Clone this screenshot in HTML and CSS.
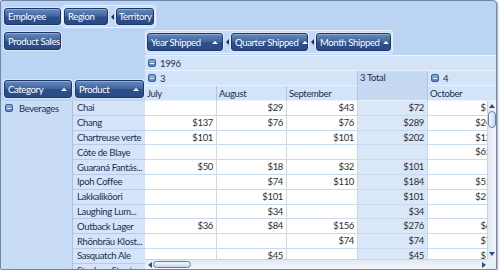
FILE: index.html
```html
<!DOCTYPE html>
<html lang="en">
<head>
    <meta charset="UTF-8">
    <title>Product Sales Pivot</title>
    <link rel="stylesheet" href="styles.css">
</head>
<body>
<div class="pivot">
    <div class="filter-bar">
        <div class="btn employee">Employee</div>
        <div class="field-group">
            <div class="btn region">Region</div>
            <div class="sep"></div>
            <div class="btn territory">Territory</div>
        </div>
    </div>

    <div class="main">
        <div class="left">
            <div class="data-fields">
                <div class="btn sales">Product Sales</div>
                <div class="row-fields">
                    <div class="btn sort category">Category</div>
                    <div class="btn sort product">Product</div>
                </div>
            </div>
            <div class="row-area">
                <div class="cat-col">
                    <div class="cat-cell"><span class="minus"></span>Beverages</div>
                </div>
                <div class="prod-col">
                    <div class="pr">Chai</div>
                    <div class="pr">Chang</div>
                    <div class="pr">Chartreuse verte</div>
                    <div class="pr">Côte de Blaye</div>
                    <div class="pr">Guaraná Fantás...</div>
                    <div class="pr">Ipoh Coffee</div>
                    <div class="pr">Lakkaliköori</div>
                    <div class="pr">Laughing Lum...</div>
                    <div class="pr">Outback Lager</div>
                    <div class="pr">Rhönbräu Klost...</div>
                    <div class="pr">Sasquatch Ale</div>
                    <div class="pr">Steeleye Stout</div>
                </div>
            </div>
        </div>

        <div class="right">
            <div class="col-fields">
                <div class="field-group cols">
                    <div class="btn sort year">Year Shipped</div>
                    <div class="sep"></div>
                    <div class="btn sort quarter">Quarter Shipped</div>
                    <div class="sep"></div>
                    <div class="btn sort month">Month Shipped</div>
                </div>
            </div>

            <div class="col-header">
                <div class="hc year-cell"><span class="minus"></span>1996</div>
                <div class="hc q3"><span class="minus"></span>3</div>
                <div class="hc total">3 Total</div>
                <div class="hc q4"><span class="minus"></span>4</div>
                <div class="hc">July</div>
                <div class="hc">August</div>
                <div class="hc">September</div>
                <div class="hc oct">October</div>
            </div>

            <div class="body">
                <div class="cells">
                    <div class="dr"><div class="c"></div><div class="c">$29</div><div class="c">$43</div><div class="c tot">$72</div><div class="c">$18</div></div>
                    <div class="dr"><div class="c">$137</div><div class="c">$76</div><div class="c">$76</div><div class="c tot">$289</div><div class="c">$247</div></div>
                    <div class="dr"><div class="c">$101</div><div class="c"></div><div class="c">$101</div><div class="c tot">$202</div><div class="c">$126</div></div>
                    <div class="dr"><div class="c"></div><div class="c"></div><div class="c"></div><div class="c tot"></div><div class="c">$659</div></div>
                    <div class="dr"><div class="c">$50</div><div class="c">$18</div><div class="c">$32</div><div class="c tot">$101</div><div class="c"></div></div>
                    <div class="dr"><div class="c"></div><div class="c">$74</div><div class="c">$110</div><div class="c tot">$184</div><div class="c">$552</div></div>
                    <div class="dr"><div class="c"></div><div class="c">$101</div><div class="c"></div><div class="c tot">$101</div><div class="c">$216</div></div>
                    <div class="dr"><div class="c"></div><div class="c">$34</div><div class="c"></div><div class="c tot">$34</div><div class="c"></div></div>
                    <div class="dr"><div class="c">$36</div><div class="c">$84</div><div class="c">$156</div><div class="c tot">$276</div><div class="c">$60</div></div>
                    <div class="dr"><div class="c"></div><div class="c"></div><div class="c">$74</div><div class="c tot">$74</div><div class="c">$78</div></div>
                    <div class="dr"><div class="c"></div><div class="c">$45</div><div class="c"></div><div class="c tot">$45</div><div class="c">$14</div></div>
                    <div class="dr"><div class="c"></div><div class="c"></div><div class="c"></div><div class="c tot"></div><div class="c"></div></div>
                </div>
                <div class="vscroll">
                    <span class="arrow up"></span>
                    <span class="thumb"></span>
                    <span class="fill"></span>
                    <span class="arrow down"></span>
                </div>
            </div>

            <div class="hbar">
                <div class="htrack">
                    <span class="arrow left"></span>
                    <span class="thumb"></span>
                    <span class="fill"></span>
                    <span class="arrow right"></span>
                </div>
                <div class="corner"></div>
            </div>
        </div>
    </div>
</div>
</body>
</html>
```

FILE: styles.css
```css
body {
  margin: 0;
  font-family: Lato, "Open Sans", sans-serif;
  font-size: 9.5px;
  letter-spacing: -0.35px;
}

.pivot {
  width: 497px;
  height: 270px;
  box-sizing: border-box;
  border: 1px solid #6f87aa;
  border-radius: 2px 4px 2px 2px;
  background: #bcd4f4;
  display: flex;
  flex-direction: column;
  overflow: hidden;
  box-shadow: 1px 1px 2px rgba(0, 0, 0, 0.35);
}

/* field buttons */
.btn {
  height: 17px;
  box-sizing: border-box;
  display: flex;
  align-items: center;
  padding: 0 2px;
  color: #fff;
  white-space: nowrap;
  border: 1px solid #1d3868;
  border-radius: 3px;
  background: linear-gradient(#6688bd, #41659e 48%, #2d508b 52%, #2a4b85);
  box-shadow: 0 0 0 1px rgba(255, 255, 255, 0.45), inset 0 1px 0 rgba(255, 255, 255, 0.3);
  flex: none;
}

.btn.sort {
  justify-content: space-between;
  height: 18px;
  padding-left: 3px;
}

.btn.sort::after {
  content: "";
  border-bottom: 3px solid #fff;
  border-left: 3px solid transparent;
  border-right: 3px solid transparent;
  margin: 0 2px 0 3px;
}

.employee { width: 57px; margin-top: 3px; padding-left: 3px; }
.region { width: 44px; padding-left: 3px; }
.territory { width: 38px; }
.sales { width: 57px; height: 18px; padding-left: 3px; }
.year { width: 76px; }
.quarter { width: 77px; }
.month { width: 75px; }
.category { width: 68px; }
.product { width: 69px; }

.field-group {
  display: flex;
  align-items: center;
  height: 23px;
  box-sizing: border-box;
  padding: 0 1px;
  border: 1px solid #eaf2fc;
  border-radius: 3px;
  background: rgba(255, 255, 255, 0.12);
}

.field-group.cols {
  height: 24px;
}

.sep {
  width: 8px;
  display: flex;
  justify-content: center;
  flex: none;
}

.sep::before {
  content: "";
  border-right: 3px solid #1c335e;
  border-top: 3px solid transparent;
  border-bottom: 3px solid transparent;
}

.filter-bar {
  height: 28px;
  flex: none;
  box-sizing: border-box;
  display: flex;
  align-items: flex-start;
  gap: 1px;
  padding: 4px 0 0 3px;
}

.main {
  flex: 1;
  display: flex;
  min-height: 0;
}

/* left side: data field + row fields + row headers */
.left {
  width: 144px;
  flex: none;
  display: flex;
  flex-direction: column;
}

.data-fields {
  height: 72px;
  flex: none;
  box-sizing: border-box;
  display: flex;
  flex-direction: column;
  justify-content: space-between;
  padding: 3px 0 3px 3px;
}

.row-fields {
  display: flex;
  gap: 3px;
}

.row-area {
  flex: 1;
  display: flex;
  overflow: hidden;
  color: #1b2f4e;
}

.cat-col {
  width: 72px;
  box-sizing: border-box;
  border-right: 1px solid #a9c1e2;
  background: #c8dcf5;
}

.cat-cell {
  height: 14.8px;
  display: flex;
  align-items: center;
  padding-left: 4px;
}

.cat-cell .minus {
  margin-right: 6px;
}

.prod-col {
  width: 72px;
}

.pr {
  height: 14.8px;
  box-sizing: border-box;
  display: flex;
  align-items: center;
  padding-left: 4px;
  white-space: nowrap;
  overflow: hidden;
  background: #d5e4f8;
  border-bottom: 1px solid #b6cbe8;
}

.minus {
  width: 8px;
  height: 8px;
  box-sizing: border-box;
  flex: none;
  border: 1px solid #3b5f9c;
  border-radius: 2px;
  background: linear-gradient(#8cadda, #5a80bf);
  display: flex;
  align-items: center;
  justify-content: center;
}

.minus::before {
  content: "";
  width: 4px;
  height: 1px;
  background: #e8f0fb;
}

/* right side: column fields, column headers, cells */
.right {
  width: 351px;
  flex: none;
  display: flex;
  flex-direction: column;
}

.col-fields {
  height: 26px;
  flex: none;
  box-sizing: border-box;
  padding-top: 1px;
  display: flex;
}

.col-header {
  display: grid;
  grid-template-columns: 72px 70px 71px 70px 72px;
  grid-template-rows: 15px 15px 15px;
  overflow: hidden;
  border-top: 1px solid #e9f1fb;
  flex: none;
  color: #1b2f4e;
}

.hc {
  box-sizing: border-box;
  display: flex;
  align-items: center;
  padding-left: 2px;
  white-space: nowrap;
  background: #d3e3f8;
  border-right: 1px solid #aec5e4;
  border-bottom: 1px solid #e9f1fb;
}

.hc .minus {
  margin: 0 4px 0 1px;
}

.year-cell {
  grid-column: 1 / -1;
  border-right: none;
}

.q3 {
  grid-column: 1 / 4;
}

.total {
  grid-column: 4;
  grid-row: 2 / 4;
  align-items: flex-start;
  padding-top: 1px;
  background: #c5d9f2;
}

.q4,
.oct {
  grid-column: 5;
}

.body {
  height: 158px;
  flex: none;
  display: flex;
}

.cells {
  width: 342px;
  overflow: hidden;
  background: #fff;
  color: #2e2e2e;
}

.dr {
  display: grid;
  grid-template-columns: 72px 70px 71px 70px 72px;
  height: 14.8px;
}

.c {
  box-sizing: border-box;
  text-align: right;
  padding-right: 3px;
  line-height: 13.8px;
  border-right: 1px solid #c9d9ee;
  border-bottom: 1px solid #c9d9ee;
}

.c.tot {
  background: #dae7f8;
}

/* scrollbars */
.vscroll {
  width: 9px;
  flex: none;
  box-sizing: border-box;
  display: flex;
  flex-direction: column;
  align-items: center;
  padding: 3px 0;
  background: linear-gradient(90deg, #dfe8f5, #f2f6fb);
  border-left: 1px solid #c3d3ea;
}

.fill {
  flex: 1;
}

.arrow {
  width: 0;
  height: 0;
  flex: none;
}

.arrow.up {
  border-bottom: 4px solid #2d4c80;
  border-left: 3px solid transparent;
  border-right: 3px solid transparent;
}

.arrow.down {
  border-top: 4px solid #2d4c80;
  border-left: 3px solid transparent;
  border-right: 3px solid transparent;
}

.arrow.left {
  border-right: 4px solid #2d4c80;
  border-top: 3px solid transparent;
  border-bottom: 3px solid transparent;
}

.arrow.right {
  border-left: 4px solid #2d4c80;
  border-top: 3px solid transparent;
  border-bottom: 3px solid transparent;
}

.vscroll .thumb {
  width: 8px;
  height: 17px;
  margin-top: 3px;
  box-sizing: border-box;
  border: 1px solid #5f80b4;
  border-radius: 4px;
  background: linear-gradient(90deg, #f4f8fd, #c4d6ef);
}

.hbar {
  height: 10px;
  flex: none;
  display: flex;
}

.htrack {
  width: 342px;
  box-sizing: border-box;
  display: flex;
  align-items: center;
  padding: 0 1px 0 3px;
  background: linear-gradient(#e1e9f5, #f3f6fb);
  border-top: 1px solid #c3d3ea;
}

.htrack .thumb {
  width: 38px;
  height: 7px;
  margin-left: 1px;
  box-sizing: border-box;
  border: 1px solid #5f80b4;
  border-radius: 4px;
  background: linear-gradient(#f4f8fd, #c4d6ef);
}

.corner {
  flex: 1;
  background: #e9eff8;
}
```
